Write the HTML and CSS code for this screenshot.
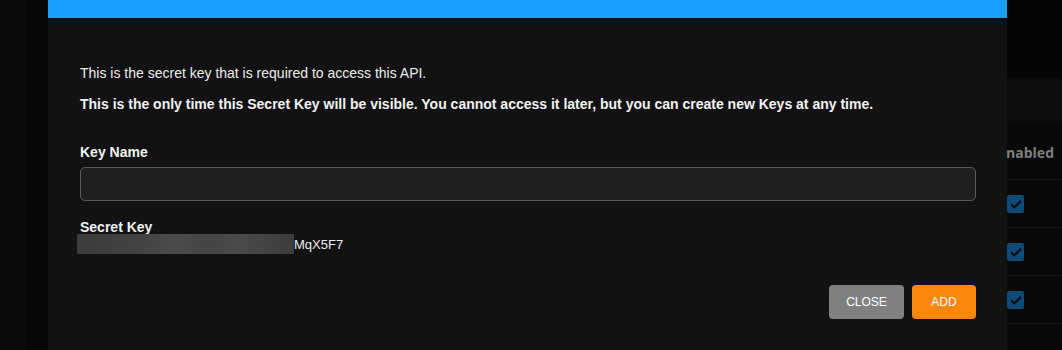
FILE: index.html
```html
<!DOCTYPE html>
<html>
<head>
<meta charset="utf-8">
<link rel="stylesheet" href="styles.css">
</head>
<body>
<div class="page">
  <div class="side"></div>
  <div class="main">
    <div class="topband"></div>
    <div class="band"></div>
    <div class="table">
      <div class="thead"><span class="th">Enabled</span></div>
      <div class="row"><span class="cb"><svg viewBox="0 0 16 16" width="16" height="16"><path d="M3 8.2l3.3 3.2L13 4.8" fill="none" stroke="#0a0a0a" stroke-width="2"/></svg></span></div>
      <div class="row"><span class="cb"><svg viewBox="0 0 16 16" width="16" height="16"><path d="M3 8.2l3.3 3.2L13 4.8" fill="none" stroke="#0a0a0a" stroke-width="2"/></svg></span></div>
      <div class="row"><span class="cb"><svg viewBox="0 0 16 16" width="16" height="16"><path d="M3 8.2l3.3 3.2L13 4.8" fill="none" stroke="#0a0a0a" stroke-width="2"/></svg></span></div>
    </div>
  </div>
</div>

<div class="modal">
  <div class="modal-head"></div>
  <div class="modal-body">
    <p class="intro">This is the secret key that is required to access this API.</p>
    <p class="warn">This is the only time this Secret Key will be visible. You cannot access it later, but you can create new Keys at any time.</p>
    <label class="label name-label">Key Name</label>
    <div class="input"></div>
    <label class="label secret-label">Secret Key</label>
    <div class="secret"><span class="blur"></span><span class="tail">MqX5F7</span></div>
    <div class="actions">
      <button class="btn close">CLOSE</button>
      <button class="btn add">ADD</button>
    </div>
  </div>
</div>
</body>
</html>
```

FILE: styles.css
```css
* { box-sizing: border-box; }
html, body { margin: 0; padding: 0; }
body {
  width: 1062px;
  height: 350px;
  overflow: hidden;
  background: #060606;
  font-family: "Liberation Sans", Arial, sans-serif;
  position: relative;
}
.page {
  display: flex;
  height: 350px;
}
.side {
  width: 48px;
  background: linear-gradient(90deg, #0a0a0a 0, #0a0a0a 26px, #070707 27px, #060606 48px);
}
.main {
  flex: 1;
  display: flex;
  flex-direction: column;
}
.topband { height: 78px; background: #050505; }
.band { height: 48px; background: #0b0b0b; }
.table { background: #080808; flex: 1; }
.thead {
  height: 54px;
  display: flex;
  align-items: center;
  justify-content: flex-end;
  padding-right: 8px;
  border-bottom: 1px solid #1a1a1a;
}
.th {
  font-family: "Open Sans", sans-serif;
  font-weight: 700;
  font-size: 14px;
  color: #7f7f7f;
}
.row {
  height: 48px;
  border-bottom: 1px solid #1a1a1a;
  display: flex;
  align-items: center;
  padding-left: 959px;
}
.cb {
  width: 17px;
  height: 18px;
  background: #0e4a77;
  border-radius: 2px;
  display: flex;
  align-items: center;
  justify-content: center;
}

.modal {
  position: absolute;
  left: 48px;
  top: 0;
  width: 959px;
  height: 350px;
  background: #121212;
}
.modal-head {
  height: 18px;
  background: #1b9cff;
}
.modal-body {
  padding: 47px 31px 0 32px;
  display: flex;
  flex-direction: column;
}
.intro {
  margin: 0;
  font-size: 14px;
  line-height: 16px;
  color: #ececec;
}
.warn {
  margin: 15px 0 0;
  font-size: 14px;
  line-height: 16px;
  font-weight: 700;
  color: #f2f2f2;
}
.label {
  font-size: 14px;
  line-height: 16px;
  font-weight: 700;
  color: #f2f2f2;
}
.name-label { margin-top: 32px; }
.input {
  margin-top: 7px;
  height: 34px;
  background: #1f1f1f;
  border: 1px solid #5a5a5a;
  border-radius: 5px;
}
.secret-label { margin-top: 18px; }
.secret {
  display: flex;
  align-items: center;
  margin-left: -3px;
  height: 20px;
  margin-top: -1px;
}
.blur {
  width: 217px;
  height: 20px;
  background: linear-gradient(90deg, #3b3b3b 0%, #434343 30%, #4b4b4b 45%, #444 60%, #4a4a4a 75%, #3c3c3c 100%);
}
.tail {
  font-size: 13px;
  color: #ececec;
}
.actions {
  display: flex;
  justify-content: flex-end;
  gap: 8px;
  margin-top: 31px;
}
.btn {
  height: 34px;
  border: 0;
  border-radius: 4px;
  color: #fff;
  font-family: "Liberation Sans", Arial, sans-serif;
  font-size: 12px;
  padding: 0;
}
.close { width: 75px; background: #808080; }
.add { width: 64px; background: #fb880c; }
```
